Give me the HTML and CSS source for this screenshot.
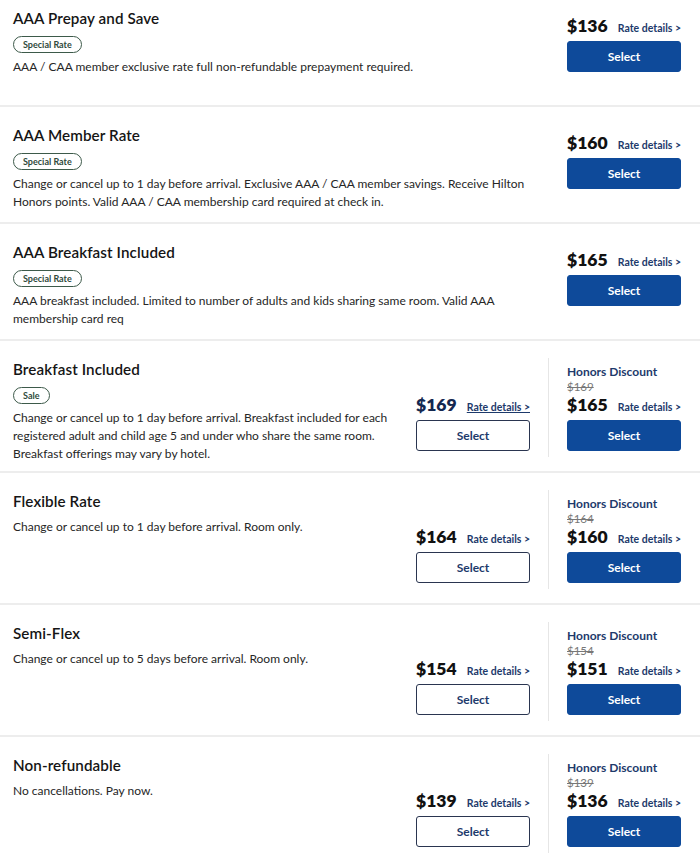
FILE: index.html
```html
<!DOCTYPE html>
<html>
<head>
<meta charset="utf-8">
<link rel="stylesheet" href="styles.css">
</head>
<body>
<div class="list">
  <section class="rate first">
    <div class="info">
      <h3 class="title">AAA Prepay and Save</h3>
      <span class="badge">Special Rate</span>
      <p class="desc">AAA / CAA member exclusive rate full non-refundable prepayment required.</p>
    </div>
    <div class="prices top">
      <div class="block">
        <div class="price-row"><span class="amount">$136</span><a class="details">Rate details &gt;</a></div>
        <button class="btn primary">Select</button>
      </div>
    </div>
  </section>

  <section class="rate">
    <div class="info">
      <h3 class="title">AAA Member Rate</h3>
      <span class="badge">Special Rate</span>
      <p class="desc">Change or cancel up to 1 day before arrival. Exclusive AAA / CAA member savings. Receive Hilton Honors points. Valid AAA / CAA membership card required at check in.</p>
    </div>
    <div class="prices top">
      <div class="block">
        <div class="price-row"><span class="amount">$160</span><a class="details">Rate details &gt;</a></div>
        <button class="btn primary">Select</button>
      </div>
    </div>
  </section>

  <section class="rate">
    <div class="info">
      <h3 class="title">AAA Breakfast Included</h3>
      <span class="badge">Special Rate</span>
      <p class="desc">AAA breakfast included. Limited to number of adults and kids sharing same room. Valid AAA membership card req</p>
    </div>
    <div class="prices top">
      <div class="block">
        <div class="price-row"><span class="amount">$165</span><a class="details">Rate details &gt;</a></div>
        <button class="btn primary">Select</button>
      </div>
    </div>
  </section>

  <section class="rate split">
    <div class="info">
      <h3 class="title">Breakfast Included</h3>
      <span class="badge">Sale</span>
      <p class="desc">Change or cancel up to 1 day before arrival. Breakfast included for each registered adult and child age 5 and under who share the same room. Breakfast offerings may vary by hotel.</p>
    </div>
    <div class="prices">
      <div class="block">
        <div class="price-row"><span class="amount navy">$169</span><a class="details underline">Rate details &gt;</a></div>
        <button class="btn outline">Select</button>
      </div>
      <div class="block honors">
        <div class="honors-label">Honors Discount</div>
        <div class="was">$169</div>
        <div class="price-row"><span class="amount">$165</span><a class="details">Rate details &gt;</a></div>
        <button class="btn primary">Select</button>
      </div>
    </div>
  </section>

  <section class="rate split">
    <div class="info">
      <h3 class="title">Flexible Rate</h3>
      <p class="desc">Change or cancel up to 1 day before arrival. Room only.</p>
    </div>
    <div class="prices">
      <div class="block">
        <div class="price-row"><span class="amount">$164</span><a class="details">Rate details &gt;</a></div>
        <button class="btn outline">Select</button>
      </div>
      <div class="block honors">
        <div class="honors-label">Honors Discount</div>
        <div class="was">$164</div>
        <div class="price-row"><span class="amount">$160</span><a class="details">Rate details &gt;</a></div>
        <button class="btn primary">Select</button>
      </div>
    </div>
  </section>

  <section class="rate split">
    <div class="info">
      <h3 class="title">Semi-Flex</h3>
      <p class="desc">Change or cancel up to 5 days before arrival. Room only.</p>
    </div>
    <div class="prices">
      <div class="block">
        <div class="price-row"><span class="amount">$154</span><a class="details">Rate details &gt;</a></div>
        <button class="btn outline">Select</button>
      </div>
      <div class="block honors">
        <div class="honors-label">Honors Discount</div>
        <div class="was">$154</div>
        <div class="price-row"><span class="amount">$151</span><a class="details">Rate details &gt;</a></div>
        <button class="btn primary">Select</button>
      </div>
    </div>
  </section>

  <section class="rate split">
    <div class="info">
      <h3 class="title">Non-refundable</h3>
      <p class="desc">No cancellations. Pay now.</p>
    </div>
    <div class="prices">
      <div class="block">
        <div class="price-row"><span class="amount">$139</span><a class="details">Rate details &gt;</a></div>
        <button class="btn outline">Select</button>
      </div>
      <div class="block honors">
        <div class="honors-label">Honors Discount</div>
        <div class="was">$139</div>
        <div class="price-row"><span class="amount">$136</span><a class="details">Rate details &gt;</a></div>
        <button class="btn primary">Select</button>
      </div>
    </div>
  </section>
</div>
</body>
</html>
```

FILE: styles.css
```css
* { box-sizing: border-box; }
html, body { margin: 0; padding: 0; background: #fff; }
body {
  font-family: "Lato", "Liberation Sans", sans-serif;
  color: #1a1a1a;
  width: 700px;
  overflow: hidden;
}
.list { margin-top: -10px; }
.rate {
  display: flex;
  gap: 18px;
  padding: 17px 19px 0 13px;
  min-height: 117px;
  border-bottom: 2px solid #ededed;
}
.rate.split { min-height: 132px; }
.info { flex: 1; min-width: 0; }
.title {
  margin: 0;
  font-size: 15.2px;
  line-height: 22px;
  font-weight: 600;
  color: #151515;
  letter-spacing: 0.1px;
}
.badge {
  display: inline-block;
  margin-top: 7px;
  height: 17px;
  padding: 0 9px;
  border: 1px solid #3d5a4a;
  border-radius: 9px;
  font-size: 9px;
  line-height: 15px;
  font-weight: 700;
  color: #2f4a3c;
}
.desc {
  margin: 5px 0 0;
  font-size: 12px;
  line-height: 18px;
  color: #262626;
}
.split .title + .desc { margin-top: 6px; }
.prices { display: flex; gap: 18px; align-items: flex-end; padding-bottom: 20px; }
.prices.top { align-items: flex-start; padding-top: 8px; padding-bottom: 0; }
.block { width: 114px; display: flex; flex-direction: column; }
.honors {
  border-left: 1px solid #e6e6e6;
  padding-left: 18px;
  width: 133px;
  margin-bottom: -6px;
  padding-bottom: 6px;
  padding-top: 6px;
}
.honors-label {
  font-size: 12px;
  line-height: 15px;
  font-weight: 700;
  color: #1d3a6b;
}
.was {
  font-size: 11.5px;
  line-height: 15px;
  color: #777;
  text-decoration: line-through;
}
.price-row {
  display: flex;
  justify-content: space-between;
  align-items: baseline;
  height: 22px;
  margin-bottom: 4px;
}
.amount {
  font-size: 17.5px;
  font-weight: 800;
  color: #111;
  line-height: 22px;
}
.amount.navy { color: #142850; }
.details {
  font-size: 10.5px;
  font-weight: 700;
  color: #1d3a6b;
}
.details.underline { text-decoration: underline; }
.btn {
  width: 114px;
  height: 31px;
  border-radius: 3px;
  font-family: inherit;
  font-size: 12px;
  font-weight: 700;
  cursor: pointer;
}
.btn.primary {
  background: #0e4a9a;
  color: #fff;
  border: 1px solid #0e4a9a;
}
.btn.outline {
  background: #fff;
  color: #1d3a6b;
  border: 1px solid #2a3550;
}
```
